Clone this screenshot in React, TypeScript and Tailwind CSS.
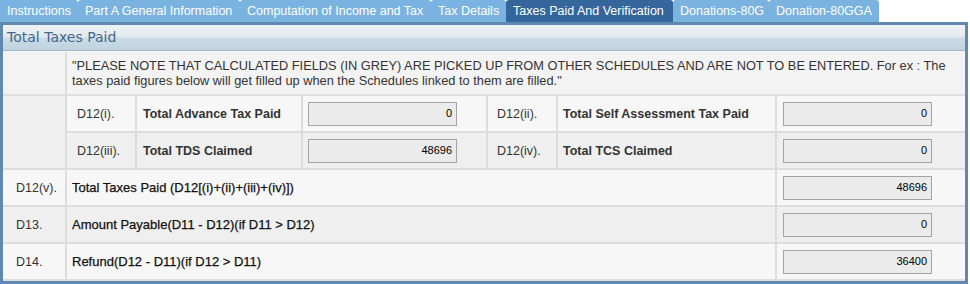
import React from "react";

const tabs = [
  { label: "Instructions", w: "w-[78px]" },
  { label: "Part A General Information", w: "w-[162px]" },
  { label: "Computation of Income and Tax", w: "w-[191px]" },
  { label: "Tax Details", w: "w-[75px]" },
  { label: "Taxes Paid And Verification", w: "w-[167px]", active: true },
  { label: "Donations-80G", w: "w-[96px]" },
  { label: "Donation-80GGA", w: "w-[110px]" },
];

function Field({ value }: { value: string }) {
  return (
    <div className="w-[149px] h-[24px] bg-[#ebebeb] border border-[#a3a3a3] flex items-center justify-end pr-[4px] text-[11px] text-black">
      {value}
    </div>
  );
}

export default function App() {
  const font = { fontFamily: '"Liberation Sans", Arial, sans-serif' };
  return (
    <div className="w-[970px] h-[284px] bg-white overflow-hidden" style={font}>
      {/* tabs */}
      <div className="flex h-[22px]">
        {tabs.map((t, i) => (
          <div
            key={t.label}
            className={`${t.w} shrink-0 h-[22px] flex items-center pl-[7px] text-[12.5px] text-white whitespace-nowrap ${
              i === 0 ? "rounded-tr-[3px]" : "rounded-t-[3px]"
            } ${t.active ? "bg-[#34669b]" : "bg-[#7ab3e0]"}`}
          >
            {t.label}
          </div>
        ))}
      </div>
      {/* panel */}
      <div className="w-[968px] border-[3px] border-[#6188b0]">
        <div className="h-[26px] flex items-center pl-[4px] bg-[linear-gradient(to_bottom,#eef2f4_0%,#e2e9ee_48%,#ccdce6_52%,#bed2de_100%)] border-b border-[#a2b7c7]">
          <span
            className="text-[14px] text-[#43668a]"
            style={{ fontFamily: '"DejaVu Sans", sans-serif' }}
          >
            Total Taxes Paid
          </span>
        </div>
        <div className="h-[1px] bg-[#f6f8f9]" />
        <div className="grid grid-cols-[62px_68px_164px_183px_68px_217px_188px] grid-rows-[42px_35px_35px_35px_35px_35px] gap-[2px] bg-[#dddddd] pb-[2px] text-[13px] text-[#333]">
          {/* note row */}
          <div className="bg-[#f3f3f3]" />
          <div className="col-span-6 bg-[#f3f3f3] flex items-center pl-[5px] pr-[2px] leading-[15px] text-[12.8px]">
            "PLEASE NOTE THAT CALCULATED FIELDS (IN GREY) ARE PICKED UP FROM OTHER SCHEDULES AND ARE NOT TO BE ENTERED. For ex : The taxes paid figures below will get filled up when the Schedules linked to them are filled."
          </div>
          {/* nested rows */}
          <div className="row-span-2 bg-[#efefef]" />
          <div className="bg-[#f7f7f7] flex items-center pl-[10px] pt-[2px] text-[12.5px]">D12(i).</div>
          <div className="bg-[#f7f7f7] flex items-center pl-[6px] pt-[2px] font-bold text-[12.5px]">Total Advance Tax Paid</div>
          <div className="bg-[#f7f7f7] flex items-center pl-[5px]"><Field value="0" /></div>
          <div className="bg-[#f7f7f7] flex items-center pl-[9px] pt-[2px] text-[12.5px]">D12(ii).</div>
          <div className="bg-[#f7f7f7] flex items-center pl-[5px] pt-[2px] font-bold text-[12.5px]">Total Self Assessment Tax Paid</div>
          <div className="bg-[#f7f7f7] flex items-center pl-[6px]"><Field value="0" /></div>

          <div className="bg-[#efefef] flex items-center pl-[10px] pt-[2px] text-[12.5px]">D12(iii).</div>
          <div className="bg-[#efefef] flex items-center pl-[6px] pt-[2px] font-bold text-[12.5px]">Total TDS Claimed</div>
          <div className="bg-[#efefef] flex items-center pl-[5px]"><Field value="48696" /></div>
          <div className="bg-[#efefef] flex items-center pl-[9px] pt-[2px] text-[12.5px]">D12(iv).</div>
          <div className="bg-[#efefef] flex items-center pl-[5px] pt-[2px] font-bold text-[12.5px]">Total TCS Claimed</div>
          <div className="bg-[#efefef] flex items-center pl-[6px]"><Field value="0" /></div>

          {/* bottom rows */}
          <div className="bg-[#f7f7f7] flex items-center pl-[13px] pt-[1px] text-[12.5px]">D12(v).</div>
          <div className="col-span-5 bg-[#f7f7f7] flex items-center pl-[5px] pt-[1px] text-[#111] [-webkit-text-stroke:0.25px_#111]">Total Taxes Paid (D12[(i)+(ii)+(iii)+(iv)])</div>
          <div className="bg-[#f7f7f7] flex items-center pl-[6px]"><Field value="48696" /></div>

          <div className="bg-[#efefef] flex items-center pl-[13px] pt-[1px] text-[12.5px]">D13.</div>
          <div className="col-span-5 bg-[#efefef] flex items-center pl-[5px] pt-[1px] text-[#111] [-webkit-text-stroke:0.25px_#111]">Amount Payable(D11 - D12)(if D11 &gt; D12)</div>
          <div className="bg-[#efefef] flex items-center pl-[6px]"><Field value="0" /></div>

          <div className="bg-[#f7f7f7] flex items-center pl-[13px] pt-[1px] text-[12.5px]">D14.</div>
          <div className="col-span-5 bg-[#f7f7f7] flex items-center pl-[5px] pt-[1px] text-[#111] [-webkit-text-stroke:0.25px_#111]">Refund(D12 - D11)(if D12 &gt; D11)</div>
          <div className="bg-[#f7f7f7] flex items-center pl-[6px]"><Field value="36400" /></div>
        </div>
      </div>
    </div>
  );
}
